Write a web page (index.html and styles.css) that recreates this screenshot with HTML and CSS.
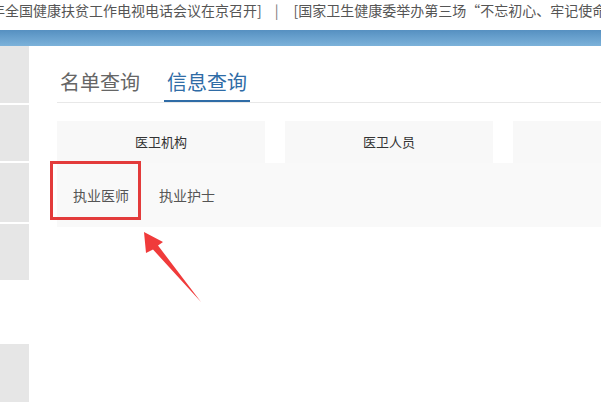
FILE: index.html
```html
<!DOCTYPE html>
<html lang="zh-CN">
<head>
<meta charset="utf-8">
<title>信息查询</title>
<link rel="stylesheet" href="styles.css">
</head>
<body>
<div class="ticker"><span class="news first">年全国健康扶贫工作电视电话会议在京召开]</span><span class="sep">|</span><span class="news">[国家卫生健康委举办第三场“不忘初心、牢记使命</span></div>
<div class="frame">
  <div class="left">
    <div class="bluebar"></div>
    <div class="main">
      <div class="sidebar">
        <div class="sb-block h57"></div>
        <div class="sb-block h56"></div>
        <div class="sb-block h59"></div>
        <div class="sb-block h56"></div>
        <div class="sb-gap"></div>
        <div class="sb-block h58"></div>
        <div class="sb-block h20"></div>
      </div>
      <div class="content">
        <div class="tabs">
          <div class="tab">名单查询</div>
          <div class="tab active">信息查询</div>
        </div>
        <div class="panel">
          <div class="cats">
            <div class="cat">医卫机构</div>
            <div class="cat">医卫人员</div>
            <div class="cat"></div>
          </div>
          <div class="subs">
            <div class="sub">执业医师</div>
            <div class="sub">执业护士</div>
          </div>
        </div>
        <div class="highlight"></div>
        <svg class="arrow" width="70" height="80" viewBox="0 0 70 80">
          <polygon points="4,4 23,14 18,17.5 61,74 13,21.5 6,25" fill="#f03b3b"/>
        </svg>
      </div>
    </div>
  </div>
  <div class="edge">
    <div class="edge-top"></div>
    <div class="edge-line"></div>
  </div>
</div>
</body>
</html>
```
FILE: styles.css
```css
html, body {
  margin: 0;
  padding: 0;
  background: #fff;
  font-family: "Noto Sans CJK SC", "Noto Sans", sans-serif;
}
body {
  width: 601px;
  height: 402px;
  overflow: hidden;
}
.ticker {
  height: 30px;
  white-space: nowrap;
  overflow: hidden;
  font-size: 14px;
  line-height: 20px;
  color: #555;
}
.ticker .first {
  margin-left: -9px;
}
.ticker .sep {
  margin: 0 15px 0 13px;
  color: #777;
}
.frame {
  display: flex;
  height: 372px;
}
.left {
  flex: 1;
  display: flex;
  flex-direction: column;
  min-height: 0;
}
.bluebar {
  flex: none;
  height: 16px;
  background: linear-gradient(#5690c1, #7cb2da);
}
.main {
  flex: 1;
  display: flex;
  min-height: 0;
  overflow: hidden;
}
.sidebar {
  width: 29px;
  flex: none;
  display: flex;
  flex-direction: column;
  gap: 2px;
}
.sb-block {
  flex: none;
  background: #e6e6e6;
}
.h57 { height: 57px; }
.h56 { height: 56px; }
.h59 { height: 59px; }
.h58 { height: 58px; }
.h20 { height: 20px; }
.sb-gap { flex: none; height: 60px; }
.content {
  flex: 1;
  position: relative;
  padding-left: 28px;
}
.tabs {
  display: flex;
  gap: 21px;
  margin-top: 22px;
  border-bottom: 1px solid #e8e8e8;
  height: 34px;
}
.tab {
  font-size: 20px;
  line-height: 28px;
  padding: 0 3px 4px;
  color: #666;
}
.tab.active {
  color: #2f6ca6;
  border-bottom: 2px solid #2f6ca6;
}
.panel {
  margin-top: 18px;
}
.cats {
  display: flex;
  gap: 20px;
  height: 42px;
}
.cat {
  width: 208px;
  flex: none;
  background: #f8f8f8;
  font-size: 13px;
  color: #333;
  text-align: center;
  line-height: 42px;
}
.subs {
  background: #f9f9f9;
  height: 64px;
  display: flex;
  gap: 30px;
  padding-left: 16px;
  align-items: center;
}
.sub {
  font-size: 14px;
  color: #555;
  line-height: 20px;
}
.highlight {
  position: absolute;
  left: 21px;
  top: 115px;
  width: 91px;
  height: 59px;
  box-sizing: border-box;
  border: 3px solid #e33b3b;
}
.arrow {
  position: absolute;
  left: 111px;
  top: 182px;
}
.edge {
  width: 3px;
  display: flex;
  flex-direction: column;
}
.edge-top {
  height: 70px;
  background: linear-gradient(90deg, #fff 0, #fff 1px, #3b78c8 1px);
  opacity: 0.6;
}
.edge-line {
  flex: 1;
  margin-left: 1px;
  width: 1px;
  background: #444;
}
```
